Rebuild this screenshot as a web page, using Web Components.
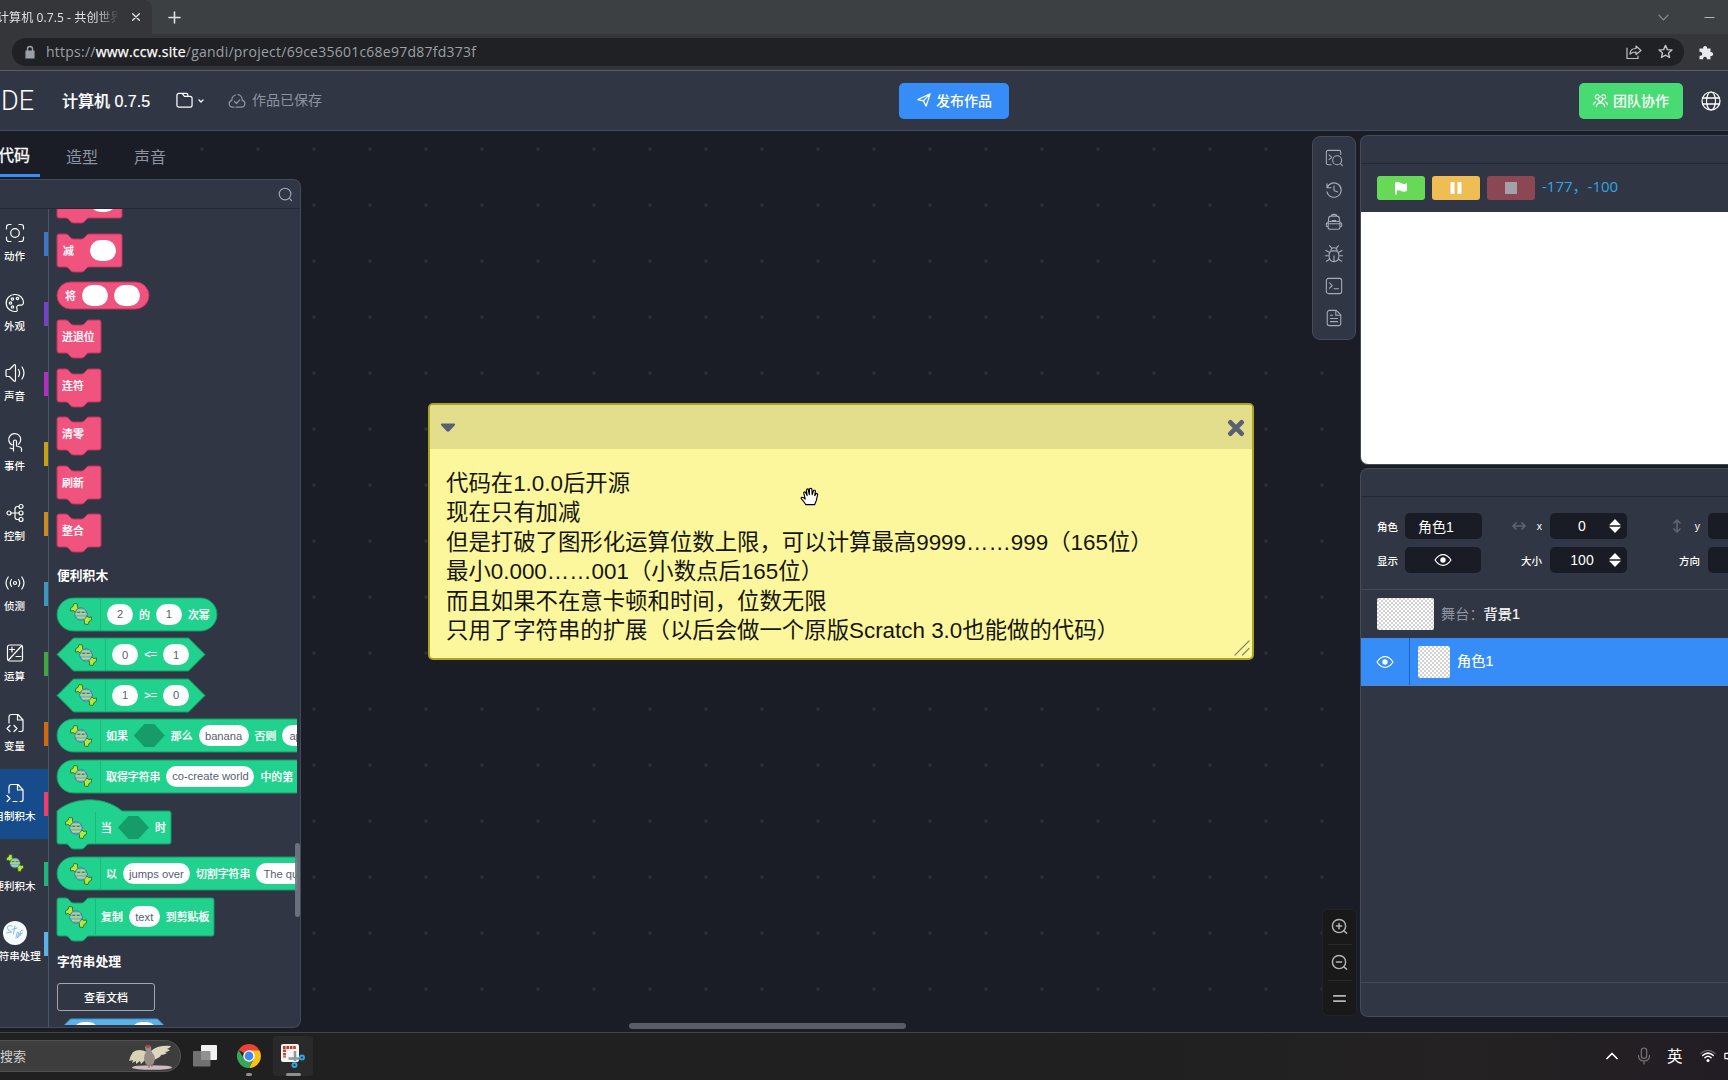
<!DOCTYPE html>
<html lang="zh-CN">
<head>
<meta charset="utf-8">
<title>计算机 0.7.5 - 共创世界</title>
<style>
    :root {
        --panel: #303643;
        --line: #424b59;
        --canvas: #1b1d26;
        --blue: #378df8;
        --muted: #8d94a1;
    }
    body {
        margin: 0;
        width: 1728px;
        height: 1080px;
        overflow: hidden;
        display: flex;
        flex-direction: column;
        background: var(--canvas);
        color: #fff;
        font-family: "Liberation Sans", "Noto Sans CJK SC", sans-serif;
    }
    main {
        display: flex;
        height: 901px;
    }
</style>
</head>
<body>
<browser-bar></browser-bar>
<ide-header></ide-header>
<main>
    <ide-workspace>
        <sticky-note>代码在1.0.0后开源
现在只有加减
但是打破了图形化运算位数上限，可以计算最高9999……999（165位）
最小0.000……001（小数点后165位）
而且如果不在意卡顿和时间，位数无限
只用了字符串的扩展（以后会做一个原版Scratch 3.0也能做的代码）</sticky-note>
    </ide-workspace>
    <ide-side></ide-side>
</main>
<task-bar></task-bar>

<script>
const candy = `<g stroke-width=".8"><path d="M1 4.500 3 3.500 4 .5 7.500 1 7.500 4 8.500 6.500 6.500 8.500 4 8.500 3.500 7.500 1 8Z" fill="#b2ea36" stroke="#33602a"/>
    <path d="M21 17.500 19 18.500 18 21.500 14.500 21 14.500 18 13.500 15.500 15.500 13.500 18 13.500 18.500 14.500 21 14Z" fill="#b2ea36" stroke="#33602a"/>
    <circle cx="11" cy="11" r="6.200" fill="#7ab0e6" stroke="#41679a"/></g>
    <g stroke-linecap="butt"><path d="M7 7.500H15M5.200 11H16.800M7 14.500H15" stroke="#bbe044" stroke-width="1.700"/>
    <path d="M7.500 9.300H10M12 9.300H14.500" stroke="#3b5f7c" stroke-width=".9"/></g>`

// name: [viewBox size, markup]
const icons = {
    candy: [22, candy],
    close: [12, '<path d="m2 2 8 8M10 2l-8 8" stroke-width="1.6"/>'],
    plus: [12, '<path d="M6 0v12M0 6h12" stroke-width="1.7"/>'],
    lock: [14, '<path d="M3 6h8v7H3z" fill="currentColor"/><path d="M4.500 6V4a2.500 2.500 0 0 1 5 0v2" stroke-width="1.400"/>'],
    share: [16, '<path d="M1 4v10.500h11V12"/><path d="M4 10c0-4 3-5.500 6-5.500V2l5 4.500-5 4V8C7.500 8 5.500 8.500 4 10Z"/>'],
    star: [16, '<path d="m8 1.500 2 4.500 4.900.4-3.700 3.200 1.100 4.800L8 11.900l-4.300 2.500 1.100-4.800L1.100 6.400 6 6Z" stroke-width="1.500"/>'],
    puzzle: [16, '<path d="M1.500 4.500h3.700a2 2 0 1 1 3.800 0h3.500v3.700a2 2 0 1 1 0 3.800v3.300H8.800a1.900 1.900 0 1 0-3.600 0H1.500v-3.600a2 2 0 1 0 0-3.700Z" fill="currentColor" stroke="none"/>'],
    chevron: [12, '<path d="m1 3.500 5 5 5-5"/>'],
    caret: [6, '<path d="m1 2 2 2 2-2" stroke-width="1.300"/>'],
    chevronUp: [12, '<path d="m1 8.500 5-5 5 5" stroke-width="1.700"/>'],
    minus: [12, '<path d="M1 6h10"/>'],
    folder: [18, '<path d="M1 14V3.500a2 2 0 0 1 2-2h3.500L9 4.700h6a2 2 0 0 1 2 2V14a2 2 0 0 1-2 2H3a2 2 0 0 1-2-2ZM6.500 1.500H11q1.500 0 1.500 1.500v1.500" stroke-width="1.300"/>'],
    cloud: [18, '<path d="M6 15.200H4.500a3.500 3.500 0 0 1-.6-6.900A5.200 5.200 0 0 1 7.500 3M10 2.600a5.200 5.200 0 0 1 4.200 5.700 3.500 3.500 0 0 1-.7 6.900H8M6.500 9.500l2 2 3.300-3.600"/>'],
    send: [16, '<path d="M1 7.500 15 1l-4.500 14-3.200-6ZM7.300 9 15 1" stroke-width="1.400"/>'],
    team: [16, '<circle cx="8" cy="6.500" r="2.500"/><path d="M3.500 14.500c.5-2.500 2-4 4.500-4s4 1.500 4.500 4M4.500 6.500a2.300 2.300 0 1 1 1.800-4M11.500 6.500a2.300 2.300 0 1 0-1.800-4M.5 12.500c.2-1.700 1-2.600 2.200-3M15.500 12.500c-.2-1.700-1-2.600-2.200-3"/>'],
    globe: [20, '<circle cx="10" cy="10" r="9"/><ellipse cx="10" cy="10" rx="4.500" ry="9"/><path d="M1.500 7h17M1.500 13h17" stroke-width="1.400"/>'],
    search: [16, '<circle cx="7.500" cy="7.500" r="6.200"/><path d="m12.500 12.500 2 2"/>'],
    motion: [20, '<circle cx="10" cy="10" r="4.300"/><path d="M1.500 6V4a2.500 2.500 0 0 1 2.500-2.500h2M14 1.500h2A2.500 2.500 0 0 1 18.500 4v2M18.500 14v2a2.500 2.500 0 0 1-2.500 2.500h-2M6 18.500H4A2.500 2.500 0 0 1 1.500 16v-2"/>'],
    looks: [20, '<path d="M10 1.500a8.500 8.500 0 1 0 1.500 16.800c1.500-.5.500-2 .2-3.200-.4-2 1.300-3 3-2.900 2.200.1 3.800-.7 3.800-2.700A8.300 8.300 0 0 0 10 1.500Z"/><circle cx="12.500" cy="5.500" r="1.200"/><circle cx="7.500" cy="6" r="1.200"/><circle cx="5.500" cy="10" r="1.200"/><circle cx="7.500" cy="14" r="1.200"/>'],
    sound: [20, '<path d="M1 7.500c0-.6.400-1 1-1h2.500L9 2c.7-.6 1.500-.3 1.500.7v14.600c0 1-.8 1.300-1.500.7l-4.500-4.500H2c-.6 0-1-.4-1-1ZM13.500 6.500q2.200 3.500 0 7M17 4q4 6 0 12"/>'],
    event: [20, '<path d="M7 11.900a6 6 0 1 1 6.500-.7M8.500 18V8.500a1.500 1.500 0 0 1 3 0V13l3.500 1q1.500.5 1.500 2v2.500M5 15l3.500 1"/>'],
    control: [20, '<circle cx="4" cy="10" r="2"/><circle cx="16" cy="3.500" r="2"/><circle cx="16" cy="10" r="2"/><circle cx="16" cy="16.500" r="2"/><path d="M6 10h8M14 3.500h-1.500Q10 3.500 10 6v8q0 2.500 2.500 2.500H14"/>'],
    sensing: [20, '<circle cx="10" cy="10" r="1.500"/><path d="M6.500 6.500q-2.500 3.500 0 7M13.500 6.500q2.500 3.500 0 7M3.200 4q-4.400 6 0 12M16.800 4q4.400 6 0 12"/>'],
    operators: [20, '<rect x="2.500" y="2" width="15" height="16" rx="2"/><path d="M3.500 17 16.500 3M4.500 6.500h5M7 4v5M11 13.500h5"/>'],
    variables: [20, '<path d="M4 10V4a2.500 2.500 0 0 1 2.500-2.500H13L18 7v9.500a2 2 0 0 1-2 2h-2M12.500 1.500V7H18M5 12.500 2 15.500l3 3M9 12.500l3 3-3 3"/>'],
    myblocks: [20, '<path d="M4 10V4a2.500 2.500 0 0 1 2.500-2.500H13L18 7v9.500a2 2 0 0 1-2 2h-1M12.500 1.500V7H18M2 12.500l3 3-3 3M8 18.500h4"/>'],
    strings: [24, '<circle cx="12" cy="12" r="12" fill="#f8fbfe" stroke="none"/><path d="M9 5Q4 4 4.500 7T8 10.500 3.500 12M12 5l-1.500 8M9 8.500l5-1.500M13 17q1-7 2-6t-.5 6q1.500-4 3-3.500M20 9q-3-1-3 6M15.500 13l4-1" stroke="#86bbe2" stroke-width="1"/>'],
    find: [20, '<path d="M7 17.500H3.500a2 2 0 0 1-2-2v-12a2 2 0 0 1 2-2h12a2 2 0 0 1 2 2V6M4.500 6.500l3 2.700-3 2.700"/><circle cx="13.500" cy="12.500" r="5"/><path d="m17 16 2.300 2.500"/>'],
    history: [20, '<path d="M2.200 3v4.500h4.500M2.500 7.200a8 8 0 1 1-.3 4.800M10 5.500v5l4 1.700"/>'],
    pack: [20, '<path d="M7 3.500q0-2 3-2t3 2M4 9V6.500a3 3 0 0 1 3-3h6a3 3 0 0 1 3 3V9M8 8.500h4M3.500 12h13M3.500 12V9.500h13V16q0 2-2 2h-9q-2 0-2-2ZM3.500 11h-1Q1.500 11 1.500 12.500v2q0 1 2 1M16.500 11h1q1 0 1 1.500v2q0 1-2 1"/>'],
    bug: [20, '<path d="M6.500 6.500a3.500 3.500 0 0 1 7 0M5 0.800 7.500 3.500M15 .8 12.500 3.500M7 6.500h6q2.500 1.500 2.500 5.500 0 6.500-5.500 6.500T4.500 12Q4.500 8 7 6.500ZM10 12v6M1 6l4 2M19 6l-4 2M0.500 12h4M15.500 12h4M1.500 18l4-2.500M18.500 18l-4-2.500"/>'],
    terminal: [20, '<rect x="1.500" y="1.500" width="17" height="17" rx="2.500"/><path d="m5 6.500 3 3-3 3M10 13h5"/>'],
    doc: [20, '<path d="M12.500 1.500H5a2.500 2.500 0 0 0-2.500 2.500v12A2.500 2.500 0 0 0 5 18.500h10a2.500 2.500 0 0 0 2.500-2.500V6.500ZM12 1.500V7h5.500M6 7h2.500M6 10.500h8M6 14h8"/>'],
    zoomIn: [18, '<circle cx="8.500" cy="8.500" r="7" stroke-width="1.500"/><path d="m13.500 13.500 3 2.500M8.500 5.700v5.600M5.700 8.500h5.600" stroke-width="1.600"/>'],
    zoomOut: [18, '<circle cx="8.500" cy="8.500" r="7" stroke-width="1.500"/><path d="m13.500 13.500 3 2.500M5.700 8.500h5.600" stroke-width="1.600"/>'],
    reset: [18, '<path d="M3 6.300h12M3 11.700h12" stroke-width="1.900"/>'],
    flag: [14, '<path d="M1 1.500q3-1.300 6 .5t6 0v8q-3 1.500-6 0-2-1.200-4-.5v4H1Z" fill="currentColor" stroke="none"/>'],
    pause: [14, '<path d="M1.500 1h4v12h-4ZM8.500 1h4v12h-4Z" fill="currentColor" stroke="none"/>'],
    stop: [14, '<path d="M1 1h12v12H1z" fill="currentColor" stroke="none"/>'],
    eye: [18, '<path d="M1 9q3.500-5.300 8-5.300T17 9q-3.500 5.300-8 5.300T1 9Z"/><circle cx="9" cy="9" r="2.700" fill="currentColor" stroke="none"/>'],
    arrowsX: [14, '<path d="M1 7h12M4 4 1 7l3 3M10 4l3 3-3 3" stroke-width="1.700"/>'],
    arrowsY: [14, '<path d="M7 1v12M4 4l3-3 3 3M4 10l3 3 3-3" stroke-width="1.700"/>'],
    spin: [14, '<path d="M7 0 13 6.200H1ZM7 14l6-6.200H1Z" fill="currentColor" stroke="none"/>'],
    fold: [16, '<path d="M1.500 3.500h13q1 .5.500 1.500l-5.500 6q-1.500 1.500-3 0L1 5Q.5 4 1.500 3.500Z" fill="currentColor" stroke="none"/>'],
    cross: [16, '<path d="m3 3 10 10M13 3 3 13" stroke-width="4.300"/>'],
    grip: [16, '<path d="M1 15 15 1M8.500 15 15 8.500"/>'],
    hand: [20, '<path d="M6 18.500Q4 15 1.500 12.500q-.8-1.500.7-1.700 1.500 0 3.300 2L4 6.500q-.2-1.700 1.300-1.500L7.500 9 6.800 3.500Q7 1.700 8.500 2l1.300 6L10 2q1.600-1.200 2.500.3L12.800 8l1.500-4.500q1.700-.5 1.900 1L15.500 9l1.700-2.300q1.500 0 1.300 1.500l-1.300 6-1.700 4.300Z" fill="#fff" stroke="#000"/>'],
    mic: [18, '<rect x="6.300" y="1" width="5.400" height="10.500" rx="2.700"/><path d="M3.500 8.500q0 5.500 5.500 5.500t5.500-5.500M9 14v3"/>'],
    wifi: [18, '<circle cx="9" cy="14" r="1.700" fill="currentColor" stroke="none"/><path d="M5.500 11q3.500-3.300 7 0M3 8.500q6-5.500 12 0" stroke-width="1.700"/><path d="M1 6.200q8-7 16 0" stroke-width="1.200" opacity=".35"/>'],
    speaker: [18, '<path d="M1 6v6h3l5 4V2L4 6Z" stroke-width="1.400"/>'],
    tasks: [24, '<rect x="8" y="1" width="16" height="15" rx="1" fill="#f1f1f1" stroke="none"/><rect x="0" y="7" width="17.500" height="15.500" rx="1" fill="#808080" fill-opacity=".85" stroke="none"/>'],
    chrome: [24, '<g stroke="none"><path d="M12 12 1.600 6A12 12 0 0 1 22.400 6Z" fill="#ea4335"/><path d="M12 6.500H22.600A12 12 0 0 1 12 24l4.800-9.200Z" fill="#fbc116"/><path d="M1.600 6 7.200 14.700 16.500 15 12 24A12 12 0 0 1 1.600 6Z" fill="#34a853"/><circle cx="12" cy="12" r="5.800" fill="#fff"/><circle cx="12" cy="12" r="4.400" fill="#4285f4"/></g>'],
    snip: [26, '<rect x="1" y="1" width="18" height="18" rx="2" fill="#f4f4f4" stroke="none"/><g stroke-linecap="butt"><path d="M3 4.500h13M4.500 6.500v8" stroke="#c23b22" stroke-width="2.800" stroke-dasharray="2.600 .8"/><path d="M15 8v10M8.500 15.500h11" stroke="#8c979f" stroke-width="2.500"/></g><circle cx="22" cy="14.500" r="2" stroke="#2fa4dd" stroke-width="2"/><circle cx="14.500" cy="22" r="2" stroke="#2fa4dd" stroke-width="2"/>'],
}

class BaseElement extends HTMLElement {
    constructor() {
        super()
        this.attachShadow({ mode: 'open' })
    }

    connectedCallback() {
        this.shadowRoot.innerHTML = `<style>* { box-sizing: border-box }</style>${this.render()}`
    }
}

class UiIcon extends BaseElement {
    render() {
        const [box, markup] = icons[this.getAttribute('name')]
        const size = this.getAttribute('size') || 20
        return `
            <style>
                :host { display: block; flex: none; width: ${size}px; height: ${size}px; }
                svg { display: block; overflow: visible; }
            </style>
            <svg width="${size}" height="${size}" viewBox="0 0 ${box} ${box}" fill="none" stroke="currentColor"
                stroke-width="1.2" stroke-linecap="round" stroke-linejoin="round">${markup}</svg>
        `
    }
}

class BrowserBar extends BaseElement {
    render() {
        return `
            <style>
                :host {
                    display: block;
                    height: 71px;
                    background: #35363a;
                    border-bottom: 1px solid #5b5d61;
                    box-sizing: border-box;
                    font-family: "Open Sans", "Noto Sans CJK SC", sans-serif;
                }
                .tabs { display: flex; align-items: center; height: 34px; background: #3c4043; color: #dfe1e5; }
                .tab {
                    display: flex;
                    align-items: center;
                    width: 152px;
                    height: 34px;
                    background: #35363a;
                    border-radius: 0 8px 0 0;
                    font-size: 12px;
                }
                .title {
                    width: 120px;
                    overflow: hidden;
                    white-space: nowrap;
                    text-indent: -3px;
                    letter-spacing: .1px;
                    -webkit-mask: linear-gradient(90deg, #000 80%, transparent 99%);
                }
                .tab ui-icon { margin-left: 11px; }
                .tabs > ui-icon { margin-left: 17px; }
                .tabs .down { margin-left: auto; color: #90949a; }
                .tabs .min { margin: 0 13px 0 35px; color: #b0b3b8; }
                .bar { display: flex; align-items: center; padding: 4px 0 0 12px; color: #e8eaed; }
                .url {
                    display: flex;
                    align-items: center;
                    width: 1672px;
                    height: 28px;
                    padding: 0 11px 0 11px;
                    border-radius: 14px;
                    background: #202124;
                    color: #9aa0a6;
                    font-size: 14px;
                }
                .url > * { margin-top: -1px; }
                .url span { margin: -2px 0 0 9px; flex: 1; letter-spacing: .24px; }
                b { color: #fff; font-weight: 400; -webkit-text-stroke: .25px; }
                .url .share { margin-right: 16px; color: #bdc1c6; }
                .url .star { color: #bdc1c6; }
                .bar > ui-icon { margin-left: 14px; }
            </style>
            <div class="tabs">
                <div class="tab"><div class="title">计算机 0.7.5 - 共创世界</div><ui-icon name="close" size="10"></ui-icon></div>
                <ui-icon name="plus" size="11"></ui-icon>
                <ui-icon class="down" name="chevron" size="11"></ui-icon>
                <ui-icon class="min" name="minus" size="11"></ui-icon>
            </div>
            <div class="bar">
                <div class="url">
                    <ui-icon name="lock" size="14"></ui-icon>
                    <span>https://<b>www.ccw.site</b>/gandi/project/69ce35601c68e97d87fd373f</span>
                    <ui-icon class="share" name="share" size="16"></ui-icon>
                    <ui-icon class="star" name="star" size="15"></ui-icon>
                </div>
                <ui-icon name="puzzle" size="16"></ui-icon>
            </div>
        `
    }
}

class IdeHeader extends BaseElement {
    render() {
        return `
            <style>
                :host {
                    display: grid;
                    grid-template-columns: 899px 110px 1fr;
                    align-items: center;
                    height: 60px;
                    background: var(--panel);
                    border-bottom: 1px solid var(--line);
                    box-sizing: border-box;
                }
                div { display: flex; align-items: center; }
                .logo { margin-left: 1px; width: 61px; font: 300 27px Roboto, sans-serif; }
                .name { width: 114px; padding-bottom: 2px; font-size: 16px; font-weight: 500; white-space: nowrap; -webkit-text-stroke: .2px; }
                .saved { gap: 6px; margin-left: 24px; color: var(--muted); font-size: 14px; line-height: 18px; }
                button {
                    display: flex;
                    align-items: center;
                    gap: 5px;
                    height: 36px;
                    padding: 0 0 2px 18px;
                    border: 0;
                    border-radius: 5px;
                    background: var(--blue);
                    color: #fff;
                    font: 500 14px "Noto Sans CJK SC", sans-serif;
                }
                button ui-icon { margin-top: 1px; }
                .right { justify-content: flex-end; gap: 18px; padding-right: 7px; }
                .team { width: 104px; padding-left: 14px; background: #49db73; }
            </style>
            <div>
                <span class="logo">DE</span>
                <span class="name">计算机 0.7.5</span>
                <ui-icon name="folder" size="17"></ui-icon>
                <ui-icon name="caret" size="6" style="margin-left:5px"></ui-icon>
                <div class="saved"><ui-icon name="cloud" size="18"></ui-icon><span style="margin-top:-2px">作品已保存</span></div>
            </div>
            <button><ui-icon name="send" size="14"></ui-icon>发布作品</button>
            <div class="right">
                <button class="team"><ui-icon name="team" size="15"></ui-icon>团队协作</button>
                <ui-icon name="globe" size="20"></ui-icon>
            </div>
        `
    }
}

class CategoryItem extends BaseElement {
    render() {
        return `
            <style>
                :host {
                    display: grid;
                    grid-template-columns: 63px 4px;
                    align-items: center;
                    height: 70px;
                    margin-left: -19px;
                    font: 500 10.500px "Noto Sans CJK SC", sans-serif;
                }
                :host([selected]) { background: #174c8c; }
                div { display: flex; flex-direction: column; align-items: center; gap: 4px; padding: 0 0 4px 4px; white-space: nowrap; }
                ui-icon { height: 22px; display: flex; align-items: center; }
                p { margin: 0; line-height: 15px; }
                i { height: 24px; background: ${this.getAttribute('color')}; }
            </style>
            <div>
                <ui-icon name="${this.getAttribute('icon')}" size="${this.getAttribute('size') || 20}"></ui-icon>
                <p><slot></slot></p>
            </div>
            <i></i>
        `
    }
}

const NOTCH = 'H9q1.500 0 2.500 1.300l2.500 2.700q1 1 2.500 1h8q1.500 0 2.500-1l2.500-2.700Q30.500 0 32 0'
const tail = h => `H32q-1.500 0-2.500 1.300l-2.500 2.700q-1 1-2.500 1h-8q-1.500 0-2.500-1l-2.500-2.700Q10.500 ${h} 9 ${h}H2Q0 ${h} 0 ${h - 2}`
const shapes = {
    stack: (w, h) => `M0 2Q0 0 2 0${NOTCH}H${w - 2}q2 0 2 2V${h - 2}q0 2-2 2${tail(h)}Z`,
    hat: (w, h) => `M0 0C17-15 48-15 65 0H${w - 2}q2 0 2 2V${h - 2}q0 2-2 2${tail(h)}Z`,
    round: (w, h) => `M${h / 2} 0H${w - h / 2}a${h / 2} ${h / 2} 0 0 1 0 ${h}H${h / 2}a${h / 2} ${h / 2} 0 0 1 0-${h}Z`,
    hex: (w, h) => `M0 ${h / 2}L${h / 2} 0H${w - h / 2}L${w} ${h / 2}L${w - h / 2} ${h}H${h / 2}Z`,
}

class CodeBlock extends BaseElement {
    render() {
        const attr = name => this.getAttribute(name)
        const w = +attr('w')
        const h = +(attr('h') || 33)
        return `
            <style>
                :host {
                    --fill: #f1537f;
                    --edge: #c23360;
                    display: grid;
                    width: ${w}px;
                    height: ${h}px;
                    margin-top: ${attr('gap')}px;
                    font: 500 10.900px "Liberation Sans", "Noto Sans CJK SC", sans-serif;
                }
                :host([green]) { --fill: #20d28d; --edge: #159a68; }
                :host([blue]) { --fill: #5cb1e6; --edge: #4795c8; }
                svg, div { grid-area: 1 / 1; }
                svg { overflow: visible; }
                path { fill: var(--fill); stroke: var(--edge); }
                div { display: flex; align-items: center; gap: 6px; padding-left: ${attr('pad')}px; white-space: nowrap; }
                ui-icon { margin-right: 2px; }
                hr { width: 1px; height: ${h - 2}px; margin: 0; border: 0; background: #19b97b; }
                ::slotted(span) { margin-top: -1px; }
                :host([green]) ::slotted(span:first-child) { margin-left: -1px; }
            </style>
            <svg width="${w}" height="${h}"><path d="${shapes[attr('shape')](w, h)}"/></svg>
            <div>${this.hasAttribute('green') ? '<ui-icon name="candy" size="22"></ui-icon><hr>' : ''}<slot></slot></div>
        `
    }
}

class BlockInput extends BaseElement {
    render() {
        return `
            <style>
                :host {
                    display: flex;
                    flex: none;
                    justify-content: center;
                    align-items: center;
                    width: ${this.getAttribute('w') || 26}px;
                    height: 21px;
                    border-radius: 11px;
                    background: #fff;
                    color: #575e75;
                    font: 11.200px "Liberation Sans", sans-serif;
                }
                :host([hex]) { width: 31px; height: 23px; border-radius: 0; background: #179c69; clip-path: polygon(0 50%, 34% 0, 66% 0, 100% 50%, 66% 100%, 34% 100%); }
            </style>
            <slot></slot>
        `
    }
}

class BlockPalette extends BaseElement {
    render() {
        return `
            <style>
                :host {
                    display: grid;
                    grid-template: 29px 1fr / 48px 1fr;
                    width: 301px;
                    height: 849px;
                    box-sizing: border-box;
                    background: var(--panel);
                    border: 1px solid var(--line);
                    border-left: 0;
                    border-radius: 0 8px 8px 0;
                    overflow: hidden;
                }
                .search { grid-column: 1 / 3; display: flex; justify-content: flex-end; align-items: center; padding: 0 7px 0 0; border-bottom: 1px solid #222834; color: #a3a9b4; }
                .cats { overflow: hidden; }
                .list { position: relative; overflow: hidden; border-left: 1px solid #44586a; }
                .blocks { width: 248px; height: 816px; padding-left: 8px; overflow: hidden; }
                span { flex: none; text-align: center; -webkit-text-stroke: .2px; }
                h4 { height: 20px; margin: 18px 0 0; font: 700 12.800px/20px "Noto Sans CJK SC", sans-serif; }
                button { display: block; width: 98px; height: 28px; margin-top: 12px; background: none; border: 1px solid #a2a7b0; border-radius: 3px; color: #fff; font: 500 11px "Noto Sans CJK SC", sans-serif; }
                .thumb { position: absolute; right: 0; top: 634px; width: 5px; height: 74px; border-radius: 3px; background: #717883; opacity: .9; }
            </style>
            <div class="search"><ui-icon name="search" size="15"></ui-icon></div>
            <div class="cats">
                <category-item icon="motion" color="#3f76c8">动作</category-item>
                <category-item icon="looks" color="#7544c4">外观</category-item>
                <category-item icon="sound" color="#b02fc0">声音</category-item>
                <category-item icon="event" color="#c8a010">事件</category-item>
                <category-item icon="control" color="#cc8c22">控制</category-item>
                <category-item icon="sensing" color="#3c97bb">侦测</category-item>
                <category-item icon="operators" color="#40a840">运算</category-item>
                <category-item icon="variables" color="#d26a0c">变量</category-item>
                <category-item icon="myblocks" color="#f03d70" selected>自制积木</category-item>
                <category-item icon="candy" color="#1fb47c" size="18">便利积木</category-item>
                <category-item icon="strings" color="#5cb1e6" size="24">字符串处理</category-item>
            </div>
            <div class="list">
                <div class="blocks">
                    <code-block shape="stack" w="65" gap="-24.500" pad="6"><span style="width:21px"></span><block-input></block-input></code-block>
                    <code-block shape="stack" w="65" gap="16" pad="6"><span style="width:21px;text-align:left">减</span><block-input></block-input></code-block>
                    <code-block shape="round" w="92" h="27" gap="15.500" pad="8"><span>将</span><block-input></block-input><block-input></block-input></code-block>
                    <code-block shape="stack" w="44" gap="11" pad="5"><span>进退位</span></code-block>
                    <code-block shape="stack" w="44" gap="15.500" pad="5"><span>连符</span></code-block>
                    <code-block shape="stack" w="44" gap="15.500" pad="5"><span>清零</span></code-block>
                    <code-block shape="stack" w="44" gap="15.500" pad="5"><span>刷新</span></code-block>
                    <code-block shape="stack" w="44" gap="15.500" pad="5"><span>整合</span></code-block>
                    <h4>便利积木</h4>
                    <code-block green shape="round" w="160" gap="12.500" pad="13"><block-input>2</block-input><span>的</span><block-input>1</block-input><span>次幂</span></code-block>
                    <code-block green shape="hex" w="148" gap="7.500" pad="18"><block-input>0</block-input><span style="width:13px">&lt;=</span><block-input>1</block-input></code-block>
                    <code-block green shape="hex" w="148" gap="7.500" pad="18"><block-input>1</block-input><span style="width:13px">&gt;=</span><block-input>0</block-input></code-block>
                    <code-block green shape="round" w="360" gap="7.500" pad="13"><span>如果</span><block-input hex></block-input><span>那么</span><block-input w="50">banana</block-input><span>否则</span><block-input w="42" style="justify-content:flex-start;text-indent:7px">apple</block-input></code-block>
                    <code-block green shape="round" w="360" gap="7.500" pad="13"><span>取得字符串</span><block-input w="88">co-create world</block-input><span>中的第</span></code-block>
                    <code-block green shape="hat" w="114" gap="18.500" pad="8"><span>当</span><block-input hex></block-input><span>时</span></code-block>
                    <code-block green shape="round" w="360" gap="13" pad="13"><span>以</span><block-input w="67">jumps over</block-input><span>切割字符串</span><block-input w="150" style="justify-content:flex-start;text-indent:7px">The quick brown fox</block-input></code-block>
                    <code-block green shape="stack" w="157" h="38" gap="7.500" pad="8"><span>复制</span><block-input w="31">text</block-input><span>到剪贴板</span></code-block>
                    <h4 style="margin-top:15px">字符串处理</h4>
                    <button>查看文档</button>
                    <code-block blue shape="hex" w="114" h="27" gap="8" pad="15.500"><block-input></block-input><span style="width:20px"></span><block-input></block-input></code-block>
                </div>
                <div class="thumb"></div>
            </div>
        `
    }
}

class StickyNote extends BaseElement {
    render() {
        return `
            <style>
                :host {
                    display: block;
                    position: absolute;
                    left: 428px;
                    top: 272px;
                    width: 826px;
                    height: 257px;
                    box-sizing: border-box;
                    border: 2px solid #aba41c;
                    border-radius: 5px;
                    background: #fcf79c;
                    color: #15150c;
                    overflow: hidden;
                }
                header { display: flex; justify-content: space-between; align-items: center; height: 44px; padding: 2px 7px 0 10px; background: #e2de8c; color: #5b5f74; }
                p { margin: 0; padding: 20px 16px; font-size: 22.400px; line-height: 29.400px; white-space: pre; }
                .hand { position: absolute; left: 370px; top: 82px; }
                .grip { position: absolute; right: 2px; bottom: 2px; color: #8b8a60; }
            </style>
            <header><ui-icon name="fold" size="16"></ui-icon><ui-icon name="cross" size="18"></ui-icon></header>
            <p><slot></slot></p>
            <ui-icon class="hand" name="hand" size="19"></ui-icon>
            <ui-icon class="grip" name="grip" size="16"></ui-icon>
        `
    }
}

class IdeWorkspace extends BaseElement {
    render() {
        return `
            <style>
                :host {
                    display: flex;
                    position: relative;
                    width: 1360px;
                    background: radial-gradient(circle, #2e323b 1px, transparent 2.200px) 6px -10px / 56px 56px;
                }
                .left { width: 301px; }
                nav { display: flex; gap: 36px; width: 196px; height: 48px; box-sizing: border-box; padding: 3px 0 2px; background: var(--canvas); color: var(--muted); font-size: 16px; }
                nav span { display: flex; align-items: center; }
                .on { width: 40px; margin-right: -10px; border-bottom: 3px solid var(--blue); color: #fff; text-indent: -2px; -webkit-text-stroke: .3px; }
                .tools { display: flex; flex-direction: column; justify-content: space-between; margin-left: auto; }
                .rail, .zoom { display: flex; flex-direction: column; align-items: center; box-sizing: border-box; }
                .rail {
                    gap: 14px;
                    width: 44px;
                    height: 204px;
                    margin: 5px 4px 0 0;
                    padding-top: 12px;
                    border: 1px solid var(--line);
                    border-radius: 8px;
                    background: var(--panel);
                    color: #a5abb7;
                }
                .zoom {
                    justify-content: space-between;
                    width: 35px;
                    height: 107px;
                    margin: 0 3px 16px auto;
                    padding: 8px 0 8px;
                    border: 1px solid #222325;
                    border-radius: 6px;
                    background: #191919;
                    color: #b4b5b5;
                }
                hr { width: 24px; height: 1px; margin: 0; border: 0; background: #292929; }
                .scroll { position: absolute; left: 629px; top: 892px; width: 277px; height: 6px; border-radius: 3px; background: #5a5c63; }
            </style>
            <div class="left">
                <nav><span class="on">代码</span><span>造型</span><span>声音</span></nav>
                <block-palette></block-palette>
            </div>
            <slot></slot>
            <div class="tools">
                <div class="rail">
                    ${['find', 'history', 'pack', 'bug', 'terminal', 'doc'].map(n => `<ui-icon name="${n}" size="18"></ui-icon>`).join('')}
                </div>
                <div class="zoom">
                    <ui-icon name="zoomIn" size="17"></ui-icon><hr>
                    <ui-icon name="zoomOut" size="17"></ui-icon><hr>
                    <ui-icon name="reset" size="17"></ui-icon>
                </div>
            </div>
            <div class="scroll"></div>
        `
    }
}

class NumField extends BaseElement {
    render() {
        return `
            <style>
                :host {
                    display: flex;
                    align-items: center;
                    width: 77px;
                    height: 26px;
                    box-sizing: border-box;
                    padding-right: 5px;
                    border-radius: 5px;
                    background: #1a1c25;
                    font: 14px "Liberation Sans", "Noto Sans CJK SC", sans-serif;
                }
                span { flex: 1; text-align: center; padding-left: 6px; }
            </style>
            <span><slot></slot></span>
            <ui-icon name="spin" size="14"></ui-icon>
        `
    }
}

class IdeSide extends BaseElement {
    render() {
        return `
            <style>
                :host { display: block; width: 368px; overflow: hidden; font: 14.200px "Liberation Sans", "Noto Sans CJK SC", sans-serif; }
                section { box-sizing: border-box; border: 1px solid var(--line); border-right: 0; background: var(--panel); overflow: hidden; }
                .stage { height: 330px; margin-top: 4px; border-radius: 8px 0 0 8px; }
                .sprites { height: 549px; margin-top: 3px; border-radius: 8px 0 0 8px; display: flex; flex-direction: column; }
                .top { flex: none; height: 28px; border-bottom: 1px solid #222834; }
                .controls { display: flex; align-items: center; gap: 7px; height: 48px; padding-left: 16px; }
                .btn { display: flex; justify-content: center; align-items: center; width: 48px; height: 24px; border-radius: 3px; background: #68d957; }
                .pos { margin: -5px 0 0 0; color: #35a3e2; font: 15px "Open Sans", "Noto Sans CJK SC", sans-serif; }
                .screen { height: 253px; background: #fff; }
                .info {
                    display: grid;
                    flex: none;
                    grid-template-columns: 28px 77px 60px 85px 73px 85px;
                    grid-template-rows: 26px 26px;
                    row-gap: 8px;
                    align-items: center;
                    height: 93px;
                    box-sizing: border-box;
                    padding: 16px 0 0 16px;
                    border-bottom: 1px solid var(--line);
                    font-size: 10.500px;
                    white-space: nowrap;
                }
                .info label { display: flex; align-items: center; justify-content: flex-end; gap: 11px; font-weight: 500; }
                .info label:nth-child(6n+1) { justify-content: flex-start; }
                .info label ui-icon { color: #5c6472; }
                .box { display: flex; align-items: center; height: 26px; padding-left: 13px; border-radius: 5px; background: #1a1c25; font-size: 14px; }
                .box.eye { width: 76px; padding: 0; justify-content: center; }
                num-field { margin-left: 8px; }
                .row { display: flex; flex: none; align-items: center; height: 48px; padding-left: 16px; }
                .row span { margin-top: -3px; -webkit-text-stroke: .2px; }
                .thumb { width: 57px; height: 32px; margin-right: 7px; border-radius: 2px; background: repeating-conic-gradient(#d2d2d2 0 25%, #fff 0 50%) 0 0 / 4px 4px; }
                .row em { font-style: normal; color: var(--muted); -webkit-text-stroke: 0; }
                .selected { padding: 0; background: var(--blue); border-bottom: 1px solid #5a87bd; }
                .selected ui-icon { width: 48px; padding-left: 15px; box-sizing: border-box; }
                .selected i { width: 1px; height: 47px; margin-right: 8px; background: #1865c4; }
                .selected .thumb { width: 32px; }
                .foot { margin-top: auto; height: 34px; border-top: 1px solid var(--line); }
            </style>
            <section class="stage">
                <div class="top"></div>
                <div class="controls">
                    <div class="btn"><ui-icon name="flag" size="14"></ui-icon></div>
                    <div class="btn" style="background:#eebd54"><ui-icon name="pause" size="14"></ui-icon></div>
                    <div class="btn" style="background:#8b4854;color:#a3a0a8"><ui-icon name="stop" size="14"></ui-icon></div>
                    <div class="pos">-177，-100</div>
                </div>
                <div class="screen"></div>
            </section>
            <section class="sprites">
                <div class="top"></div>
                <div class="info">
                    <label>角色</label><div class="box">角色1</div>
                    <label><ui-icon name="arrowsX" size="14"></ui-icon>x</label><num-field>0</num-field>
                    <label><ui-icon name="arrowsY" size="14"></ui-icon>y</label><num-field></num-field>
                    <label>显示</label><div class="box eye"><ui-icon name="eye" size="18"></ui-icon></div>
                    <label>大小</label><num-field>100</num-field>
                    <label>方向</label><num-field></num-field>
                </div>
                <div class="row"><div class="thumb"></div><span><em>舞台：</em>背景1</span></div>
                <div class="row selected"><ui-icon name="eye" size="18"></ui-icon><i></i><div class="thumb"></div><span>角色1</span></div>
                <div class="foot"></div>
            </section>
        `
    }
}

class TaskBar extends BaseElement {
    render() {
        return `
            <style>
                :host {
                    display: flex;
                    align-items: center;
                    height: 48px;
                    box-sizing: border-box;
                    border-top: 1px solid #434446;
                    background: linear-gradient(90deg, #202020 60%, #242222 85%, #221d24);
                    font: 13px "Noto Sans CJK SC", sans-serif;
                    overflow: hidden;
                }
                .search { display: flex; align-items: center; justify-content: space-between; width: 181px; height: 32px; box-sizing: border-box; padding-right: 7px; border: 1px solid #505050; border-left: 0; border-radius: 0 16px 16px 0; background: #3d3d3d; color: #d0d0d0; }
                .search, .app, .tray { margin-top: -1px; }
                .search span { margin-top: -2px; }
                .app { display: flex; justify-content: center; align-items: center; position: relative; width: 40px; height: 40px; margin-left: 4px; border-radius: 4px; }
                .app::after { content: ""; position: absolute; bottom: 0; width: var(--dot, 0); height: 3px; border-radius: 2px; background: #8f8f8f; }
                .tray { display: flex; align-items: center; gap: 15px; width: 122px; margin-left: auto; }
                .tray span { width: 16px; margin: -2px 0 0 -1px; font-size: 15.500px; }
            </style>
            <div class="search"><span>搜索</span>
                <svg width="44" height="27" viewBox="0 0 44 27">
                    <ellipse cx="23" cy="24.500" rx="20" ry="2.300" fill="#cdbcc2"/>
                    <path d="M18 9Q10 5 4 9 1 13 0 18l4-1-1 3 4-2v3l4-3 1 3 4-4Z" fill="#d7d3b4"/>
                    <path d="M22 8q6-6 20-5-1 2-4 3l3 1q-2 2-5 2l2 1q-3 2-6 2 0 2-7 5Z" fill="#dcd8bb"/>
                    <path d="M16 4q3-4 6 0l.5 5q4.500 4 3 9-1 5-5 5-5-1-5.500-8 0-3 2-6Z" fill="#948e87"/>
                    <circle cx="19" cy="3.500" r="1.800" fill="#b5413c"/><path d="M20 22v3M23 21v3" stroke="#9b5a52"/>
                </svg>
            </div>
            <div class="app"><ui-icon name="tasks" size="24"></ui-icon></div>
            <div class="app" style="--dot:6px"><ui-icon name="chrome" size="24"></ui-icon></div>
            <div class="app" style="background:#2a2a2a;--dot:15px"><ui-icon name="snip" size="26"></ui-icon></div>
            <div class="tray">
                <ui-icon name="chevronUp" size="12"></ui-icon>
                <ui-icon name="mic" size="18" style="color:#77777a;margin-left:2px"></ui-icon>
                <span>英</span>
                <ui-icon name="wifi" size="16" style="margin-left:2px"></ui-icon>
                <ui-icon name="speaker" size="16" style="margin-left:-7px"></ui-icon>
            </div>
        `
    }
}

customElements.define('ui-icon', UiIcon)
customElements.define('browser-bar', BrowserBar)
customElements.define('ide-header', IdeHeader)
customElements.define('category-item', CategoryItem)
customElements.define('block-input', BlockInput)
customElements.define('code-block', CodeBlock)
customElements.define('block-palette', BlockPalette)
customElements.define('sticky-note', StickyNote)
customElements.define('ide-workspace', IdeWorkspace)
customElements.define('num-field', NumField)
customElements.define('ide-side', IdeSide)
customElements.define('task-bar', TaskBar)
</script>
</body>
</html>
